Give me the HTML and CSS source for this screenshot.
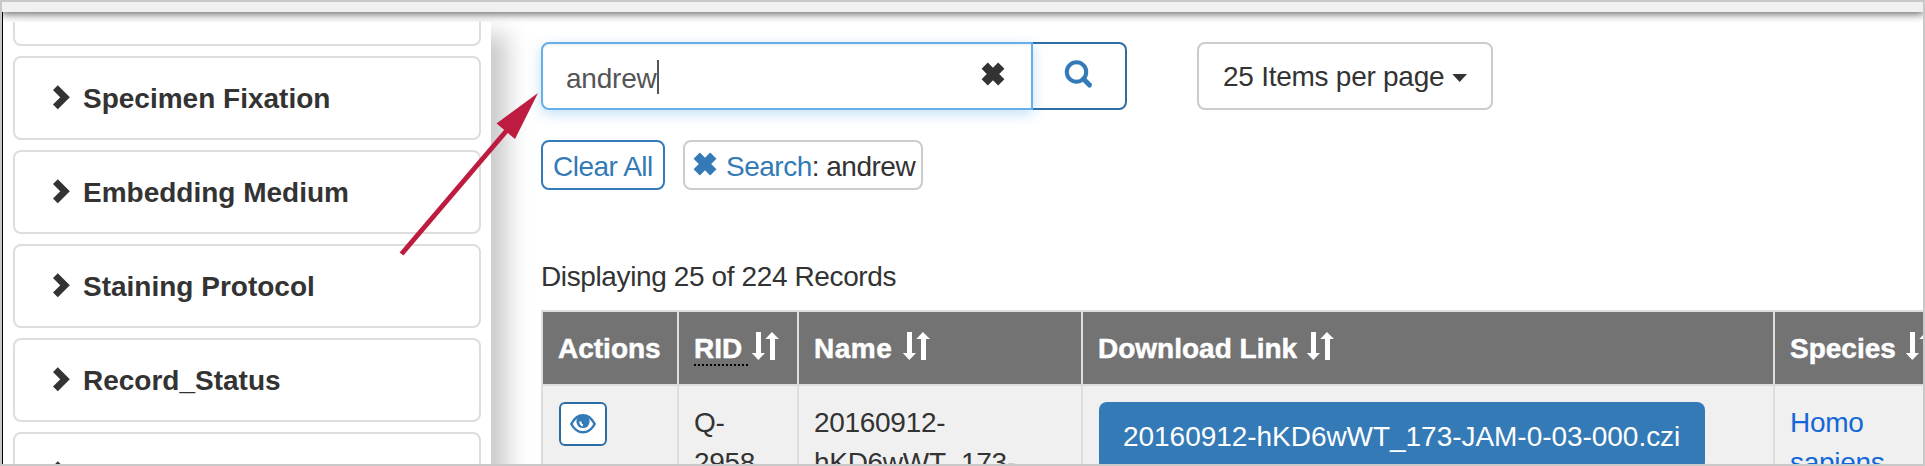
FILE: index.html
```
<!DOCTYPE html>
<html lang="en">
<head>
<meta charset="utf-8">
<title>Records</title>
<link rel="stylesheet" href="styles.css">
</head>
<body>
<svg class="defs" width="0" height="0">
  <symbol id="chevron" viewBox="0 0 18 26"><path d="M3.4 2.700 13 12.300 3.400 21.900" fill="none" stroke="currentColor" stroke-width="6.8"/></symbol>
  <symbol id="cross" viewBox="0 0 24 24"><path d="M3.700 3.700 20.300 20.300M20.300 3.700 3.700 20.300" fill="none" stroke="currentColor" stroke-width="8.8"/></symbol>
  <symbol id="sort" viewBox="0 0 28 28"><path d="M5 0h5v21h4L7.3 28 0.8 21H5zM19 28h5V7h4L20.9 0 14.3 7H19z" fill="currentColor"/></symbol>
</svg>
<div class="window">
  <header class="topbar"></header>
  <div class="layout">
    <aside class="sidebar">
      <div class="facet facet-cut"></div>
      <div class="facet"><svg class="chevron"><use href="#chevron"/></svg><span>Specimen Fixation</span></div>
      <div class="facet"><svg class="chevron"><use href="#chevron"/></svg><span>Embedding Medium</span></div>
      <div class="facet"><svg class="chevron"><use href="#chevron"/></svg><span>Staining Protocol</span></div>
      <div class="facet"><svg class="chevron"><use href="#chevron"/></svg><span>Record_Status</span></div>
      <div class="facet"><svg class="chevron"><use href="#chevron"/></svg><span class="loose">Creation Status</span></div>
    </aside>
    <main class="main">
      <div class="controls">
        <div class="search">
          <div class="field"><span class="query">andrew</span><i class="cursor"></i><svg class="cross clear"><use href="#cross"/></svg></div>
          <button class="go"><svg width="30" height="30" viewBox="0 0 30 30" fill="none" stroke="currentColor"><circle cx="12.5" cy="12" r="9.7" stroke-width="4.1"/><path d="M19.5 19 25.500 25" stroke-width="5" stroke-linecap="round"/></svg></button>
        </div>
        <button class="page-size"><span>25 Items per page</span><i class="caret"></i></button>
      </div>
      <div class="filters">
        <button class="clear-all">Clear All</button>
        <div class="chip"><svg class="cross"><use href="#cross"/></svg><span><a>Search</a>: andrew</span></div>
      </div>
      <p class="summary">Displaying 25 of 224 Records</p>
      <div class="table">
        <div class="th">Actions</div>
        <div class="th"><span class="abbr">RID&nbsp;</span><svg class="sort"><use href="#sort"/></svg></div>
        <div class="th"><span class="name">Name&nbsp;</span><svg class="sort"><use href="#sort"/></svg></div>
        <div class="th"><span>Download Link&nbsp;</span><svg class="sort"><use href="#sort"/></svg></div>
        <div class="th"><span>Species&nbsp;</span><svg class="sort"><use href="#sort"/></svg></div>
        <div class="td"><button class="view"><svg width="26" height="20" viewBox="0 0 26 20"><path d="M1.3 10C4 5 8.300 1.300 13 1.300S22 5 24.700 10C22 15 17.700 18.300 13 18.300S4 15 1.300 10z" fill="#fff" stroke="currentColor" stroke-width="2.500"/><circle cx="13" cy="7.500" r="6.600" fill="currentColor"/><path d="M10.300 7.500q0 3 2.500 4" fill="none" stroke="#fff" stroke-width="2"/></svg></button></div>
        <div class="td">Q-<br>2958</div>
        <div class="td">20160912-<br>hKD6wWT_173-</div>
        <div class="td"><a class="download">20160912-hKD6wWT_173-JAM-0-03-000.czi</a></div>
        <div class="td"><a class="term">Homo<br>sapiens</a></div>
      </div>
    </main>
  </div>
  <svg class="pointer" width="150" height="170" viewBox="0 0 150 170"><path d="M10.500 164 117 39" stroke="#bd1b40" stroke-width="5"/><path d="M147 3 105.500 33.500 124 49z" fill="#bd1b40"/></svg>
</div>
</body>
</html>
```
FILE: styles.css
```
* { box-sizing: border-box; }
body {
  margin: 0;
  font: 28px/41px "Liberation Sans", Arial, sans-serif;
  color: #333;
  background: #fff;
}
button { font: inherit; color: inherit; background: none; margin: 0; }
.defs { position: absolute; }
.window {
  position: relative;
  width: 1925px;
  height: 466px;
  border: 2px solid #c8c8c8;
  overflow: hidden;
}
.topbar {
  position: relative;
  z-index: 1;
  height: 10px;
  background: #f0f0f0;
  box-shadow: 0 1px 8px 1px rgba(0, 0, 0, .62);
}
.layout { display: flex; height: 452px; border-left: 1px solid #000; }
.sidebar {
  position: relative;
  z-index: 2;
  flex: none;
  display: flex;
  flex-direction: column;
  gap: 10px;
  width: 488px;
  height: 560px;
  margin-top: 10px;
  padding: 0 10px;
  background: #fff;
  box-shadow: 16px 12px 22px rgba(0, 0, 0, .21);
  font-weight: bold;
}
.facet {
  flex: none;
  display: flex;
  align-items: flex-start;
  gap: 13px;
  height: 84px;
  padding: 20px 37px 0;
  border: 2px solid #ddd;
  border-radius: 8px;
}
.facet-cut { height: 24px; padding: 0; border-top: 0; border-radius: 0 0 8px 8px; }
.chevron { width: 18px; height: 26px; margin-top: 7px; }
.loose { letter-spacing: .35px; word-spacing: 3px; }
.main { flex: none; width: 1500px; padding: 30px 0 0 50px; }
.controls { display: flex; gap: 70px; }
.search { display: flex; }
.field {
  position: relative;
  z-index: 1;
  display: flex;
  width: 492px;
  height: 68px;
  padding: 14px 26px 0 23px;
  border: 2px solid #66afe9;
  border-radius: 8px 0 0 8px;
  background: #fff;
  box-shadow: inset 0 2px 2px rgba(0, 0, 0, .05), 0 4px 14px rgba(102, 175, 233, .4);
  color: #555;
}
.query { letter-spacing: -.2px; }
.cursor { width: 2px; height: 34px; margin: 2px 0 0 0; background: #555; }
.cross { flex: none; width: 24px; height: 24px; }
.clear { margin: 4px 0 0 auto; color: #333; }
.go {
  display: flex;
  align-items: flex-start;
  width: 94px;
  height: 68px;
  padding: 16px 0 0 31px;
  border: 2px solid #2e6da4;
  border-left: 0;
  border-radius: 0 8px 8px 0;
  color: #337ab7;
}
.page-size {
  display: flex;
  align-items: flex-start;
  gap: 8px;
  width: 296px;
  height: 68px;
  padding: 12px 24px 0;
  border: 2px solid #ccc;
  border-radius: 8px;
  letter-spacing: -.26px;
  white-space: nowrap;
}
.caret { margin-top: 18px; width: 16px; height: 8px; background: #333; clip-path: polygon(0 0, 100% 0, 50% 100%); }
.filters { display: flex; gap: 18px; margin-top: 30px; }
.clear-all, .chip {
  display: flex;
  align-items: flex-start;
  height: 50px;
  padding: 4px 0 0 10px;
  border: 2px solid #337ab7;
  border-radius: 8px;
  letter-spacing: -.5px;
  white-space: nowrap;
}
.clear-all { width: 124px; color: #337ab7; }
.chip { gap: 9px; width: 240px; padding-left: 8px; border-color: #ccc; color: #333; }
.chip .cross { margin-top: 6px; color: #337ab7; }
.chip a { color: #337ab7; }
.summary { margin: 66px 0 13px; letter-spacing: -.38px; }
.table {
  display: grid;
  grid-template-columns: 134px 118px 282px 690px 260px;
  grid-template-rows: 72px 160px;
  gap: 2px;
  padding: 2px;
  background: #ddd;
}
.th {
  display: flex;
  padding: 16px 15px 0;
  background: #737373;
  color: #fff;
  font-weight: bold;
  white-space: nowrap;
  -webkit-text-stroke: .5px #fff;
}
.td { padding: 17px 15px; background: #f0f0f0; line-height: 40px; letter-spacing: -.3px; }
.name { letter-spacing: .5px; }
.abbr {
  height: 38px;
  background: repeating-linear-gradient(90deg, #000 0 2px, transparent 2px 4px) bottom / 100% 2px no-repeat;
}
.sort { flex: none; width: 28px; height: 28px; margin: 4px 0 0 1px; }
.view { display: block; width: 48px; height: 44px; margin: -1px 0 0 1px; padding: 8px 9px; border: 2px solid #2e6da4; border-radius: 6px; background: #fff; color: #337ab7; }
.view svg { display: block; }
.download {
  display: block;
  width: 606px;
  height: 68px;
  margin: -1px 0 0 1px;
  padding: 15px 24px;
  border-radius: 8px;
  background: #337ab7;
  color: #fff;
  letter-spacing: -.04px;
  white-space: nowrap;
}
.term { color: #1467d8; }
.pointer { position: absolute; z-index: 3; left: 389px; top: 88px; }
```
